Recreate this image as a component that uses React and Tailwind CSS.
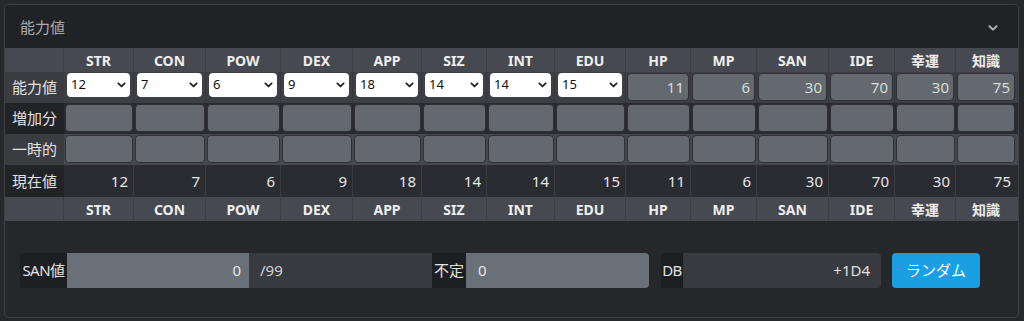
import React from 'react';

const font = { fontFamily: '"Noto Sans", "Noto Sans CJK JP", sans-serif' };

const cols = ['STR', 'CON', 'POW', 'DEX', 'APP', 'SIZ', 'INT', 'EDU', 'HP', 'MP', 'SAN', 'IDE', '幸運', '知識'];
const base = [12, 7, 6, 9, 18, 14, 14, 15];
const derived = [11, 6, 30, 70, 30, 75];
const current = [12, 7, 6, 9, 18, 14, 14, 15, 11, 6, 30, 70, 30, 75];

const gridCols = 'grid grid-cols-[59px_70px_72px_75px_72px_69px_65px_68px_71px_65px_66px_72px_66px_61px_60px]';

const Chevron = ({ className }) => (
    <svg viewBox="0 0 10 6" className={className} fill="none" stroke="currentColor" strokeWidth="2" strokeLinecap="round" strokeLinejoin="round">
        <path d="M1.5 1.2 L5 4.6 L8.5 1.2" />
    </svg>
);

const HeaderRow = () => (
    <div className={`${gridCols} bg-[#464950] h-[24px]`}>
        <div className="border-r border-[#3c3e43]" />
        {cols.map((c) => (
            <div key={c} className="flex items-center justify-center text-[14px] font-bold text-[#eeeeee] border-r border-[#3c3e43] last:border-r-0">
                {c}
            </div>
        ))}
    </div>
);

const GrayBox = ({ value }) => (
    <div className="h-[28px] w-full rounded-[4px] bg-[#646970] border border-[#2e3035] flex items-center justify-end pr-[4px] text-[15px] text-[#d6dcd6]">
        {value}
    </div>
);

const Label = ({ children, dark }) => (
    <div className={`flex items-center justify-center text-[15px] text-[#e2e2e2] ${dark ? 'bg-[#222327]' : 'bg-[#3a3c41]'}`}>
        {children}
    </div>
);

export default function App() {
    return (
        <div className="w-[1024px] h-[321px] bg-[#27282c] pt-[4px] pl-[4px]" style={font}>
            <div className="w-[1015px] h-[314px] border border-[#3f4045] rounded-[5px] overflow-hidden bg-[#26272b] flex flex-col">
                {/* Header */}
                <div className="h-[43px] bg-[#212226] flex items-center justify-between pl-[15px] pr-[20px] pt-[2px] shrink-0">
                    <span className="text-[15px] text-[#a9abae]">能力値</span>
                    <Chevron className="w-[10px] h-[6px] text-[#aeb0b3]" />
                </div>

                {/* Table */}
                <div className="flex flex-col">
                    <HeaderRow />

                    <div className={`${gridCols} h-[31px] bg-[#3d3f44]`}>
                        <Label>能力値</Label>
                        {base.map((v, i) => (
                            <div key={i} className="px-[3px] pt-[1px] border-r border-[#35373c]">
                                <div className="h-[24px] rounded-[4px] bg-white flex items-center justify-between pl-[4px] pr-[4px] text-[13px] text-[#111]">
                                    <span>{v}</span>
                                    <Chevron className="w-[9px] h-[6px] text-[#222]" />
                                </div>
                            </div>
                        ))}
                        {derived.map((v, i) => (
                            <div key={i} className="px-[1px] py-[1px] border-r border-[#35373c] last:border-r-0">
                                <GrayBox value={v} />
                            </div>
                        ))}
                    </div>

                    <div className={`${gridCols} h-[31px] bg-[#2a2b30]`}>
                        <Label dark>増加分</Label>
                        {cols.map((c) => (
                            <div key={c} className="px-[1px] py-[1px]">
                                <GrayBox value="" />
                            </div>
                        ))}
                    </div>

                    <div className={`${gridCols} h-[31px] bg-[#45484d]`}>
                        <Label>一時的</Label>
                        {cols.map((c) => (
                            <div key={c} className="px-[1px] py-[1px]">
                                <GrayBox value="" />
                            </div>
                        ))}
                    </div>

                    <div className={`${gridCols} h-[32px] bg-[#2b2c31]`}>
                        <Label dark>現在値</Label>
                        {current.map((v, i) => (
                            <div key={i} className="flex items-center justify-end pr-[5px] text-[15px] text-[#e6e6e6] border-r border-[#3a3b40] last:border-r-0">
                                {v}
                            </div>
                        ))}
                    </div>

                    <HeaderRow />
                </div>

                {/* SAN / DB */}
                <div className="flex-1 flex items-center pl-[15px] pt-[3px]">
                    <div className="flex h-[35px] text-[15px]">
                        <div className="w-[47px] bg-[#1d1e22] flex items-center justify-center text-[#e4e4e4] rounded-l-[3px] tracking-[-0.5px]">SAN値</div>
                        <div className="w-[182px] bg-[#6a7077] flex items-center justify-end pr-[8px] text-[#e8e8e8]">0</div>
                        <div className="w-[183px] bg-[#393a40] flex items-center pl-[11px] text-[#d4d4d4]">/99</div>
                        <div className="w-[34px] bg-[#1d1e22] flex items-center justify-center text-[#e4e4e4]">不定</div>
                        <div className="w-[183px] bg-[#6a7077] flex items-center pl-[12px] text-[#e8e8e8] rounded-r-[4px]">0</div>
                    </div>
                    <div className="flex h-[35px] text-[15px] ml-[12px]">
                        <div className="w-[22px] bg-[#1d1e22] flex items-center justify-center text-[#e4e4e4] rounded-l-[3px] tracking-[-0.5px]">DB</div>
                        <div className="w-[198px] bg-[#393a40] flex items-center justify-end pr-[11px] text-[#e0e0e0] rounded-r-[4px]">+1D4</div>
                    </div>
                    <button className="ml-[11px] w-[88px] h-[35px] rounded-[4px] bg-[#1a9fe3] text-white text-[15px]">
                        ランダム
                    </button>
                </div>
            </div>
        </div>
    );
}
